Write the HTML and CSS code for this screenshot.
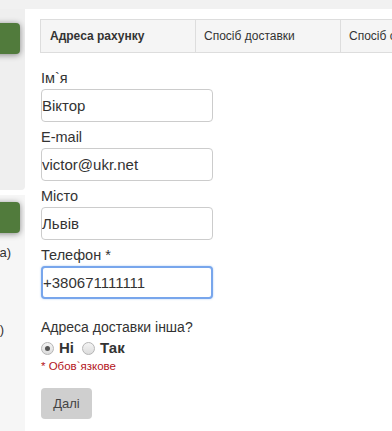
FILE: index.html
```html
<!DOCTYPE html>
<html lang="uk">
<head>
    <meta charset="UTF-8">
    <title>Оформлення замовлення</title>
    <link rel="stylesheet" href="styles.css">
</head>
<body>
    <div class="topbar"></div>

    <div class="layout">
        <aside class="sidebar">
            <div class="side-panel">
                <div class="side-inner">
                    <button class="green-btn" type="button">Кошик</button>
                </div>
            </div>
            <div class="side-panel light">
                <div class="side-inner">
                    <button class="green-btn" type="button">Замовлення</button>
                    <p class="side-text">(без доставки та ПДВ та)</p>
                    <p class="side-text lower">(разом)</p>
                </div>
            </div>
        </aside>

        <main class="content">
            <div class="tabs">
                <div class="tab active">Адреса рахунку</div>
                <div class="tab">Спосіб доставки</div>
                <div class="tab">Спосіб оплати</div>
            </div>

            <form class="checkout">
                <label for="name">Ім`я</label>
                <input type="text" id="name" value="Віктор">

                <label for="email">E-mail</label>
                <input type="text" id="email" value="victor@ukr.net">

                <label for="city">Місто</label>
                <input type="text" id="city" value="Львів">

                <label for="phone">Телефон *</label>
                <input type="text" id="phone" class="focused" value="+380671111111">

                <p class="question">Адреса доставки інша?</p>
                <div class="radios">
                    <label class="radio"><span class="dot checked"></span>Ні</label>
                    <label class="radio"><span class="dot"></span>Так</label>
                </div>
                <p class="required">* Обов`язкове</p>

                <button type="button" class="next">Далі</button>
            </form>
        </main>
    </div>
</body>
</html>
```

FILE: styles.css
```css
body {
    font-family: "Liberation Sans", Arial, sans-serif;
    margin: 0;
    padding: 0;
    background-color: #fff;
    color: #333;
    overflow: hidden;
}

.topbar {
    height: 9px;
    background-color: #f1f1f1;
}

.layout {
    display: flex;
}

.sidebar {
    width: 25px;
    flex-shrink: 0;
    overflow: hidden;
}

.side-panel {
    height: 181px;
    background-color: #efefef;
    border-bottom-right-radius: 4px;
    margin-bottom: 5px;
}

.side-panel.light {
    height: 240px;
    background-color: #f6f6f6;
    margin-bottom: 0;
}

.side-inner {
    width: 200px;
    margin-left: -180px;
    padding-top: 14px;
    text-align: right;
}

.side-panel.light .side-inner {
    padding-top: 7px;
}

.green-btn {
    display: block;
    width: 200px;
    height: 31px;
    border: none;
    border-radius: 4px;
    background-color: #517b3c;
    color: #fff;
    box-shadow: 0 1px 6px rgba(0, 0, 0, 0.45);
    font-size: 14px;
    text-align: left;
}

.side-text {
    margin: 12px 9px 0 0;
    font-size: 13px;
    color: #333;
    white-space: nowrap;
}

.side-text.lower {
    margin-top: 62px;
    margin-right: 16px;
}

.content {
    flex: 1;
    padding: 10px 0 0 15px;
    min-width: 0;
}

.tabs {
    display: flex;
    height: 32px;
    border: 1px solid #ddd;
    border-right: none;
    background-color: #f5f5f5;
}

.tab {
    flex-shrink: 0;
    display: flex;
    align-items: center;
    padding: 0 8px;
    border-right: 1px solid #ddd;
    font-size: 12px;
    color: #333;
    white-space: nowrap;
}

.tab:nth-child(1) {
    width: 137px;
    padding-left: 9px;
    font-weight: bold;
}

.tab:nth-child(2) {
    width: 128px;
}

.tab:nth-child(3) {
    width: 140px;
}

.checkout {
    padding: 15px 0 0 1px;
}

.checkout label {
    display: block;
    font-size: 14.5px;
    line-height: 20px;
    margin-bottom: 1px;
}

.checkout input {
    display: block;
    width: 172px;
    height: 33px;
    box-sizing: border-box;
    margin: 0 0 5px;
    padding: 0;
    border: 1px solid #ccc;
    border-radius: 4px;
    font-family: inherit;
    font-size: 15px;
    color: #333;
}

.checkout input.focused {
    border: 2px solid #78a6ec;
    box-shadow: 0 0 2px rgba(82, 150, 236, 0.5);
    outline: none;
}

.question {
    margin: 18px 0 1px;
    font-size: 14px;
    line-height: 20px;
}

.radios {
    display: flex;
    gap: 8px;
}

.checkout .radio {
    display: flex;
    align-items: center;
    font-size: 15px;
    font-weight: bold;
    margin: 0;
}

.dot {
    width: 11px;
    height: 11px;
    margin-right: 5px;
    border: 1px solid #b5b5b5;
    border-radius: 50%;
    background: linear-gradient(#f4f4f4, #dcdcdc);
    box-sizing: content-box;
    position: relative;
}

.dot.checked::after {
    content: "";
    position: absolute;
    left: 3px;
    top: 3px;
    width: 5px;
    height: 5px;
    border-radius: 50%;
    background-color: #555;
}

.required {
    margin: 2px 0 0;
    font-size: 11.5px;
    color: #b3141c;
}

.next {
    display: block;
    margin-top: 16px;
    width: 51px;
    height: 31px;
    border: none;
    border-radius: 4px;
    background-color: #cfcfcf;
    color: #444;
    font-family: inherit;
    font-size: 13px;
}
```
